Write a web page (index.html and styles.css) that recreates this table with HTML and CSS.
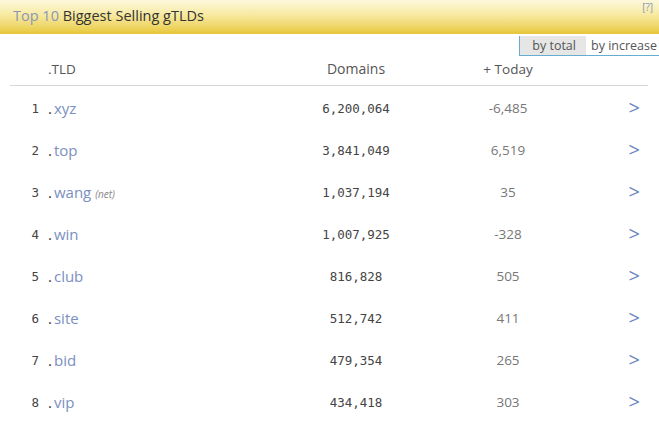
FILE: index.html
```html
<!DOCTYPE html>
<html>
<head>
<meta charset="utf-8">
<link rel="stylesheet" href="styles.css">
</head>
<body>
<div class="panel">
  <div class="head">
    <span class="title"><span class="hl">Top 10</span> Biggest Selling gTLDs</span>
    <span class="help">[?]</span>
  </div>
  <div class="tabs-row">
    <div class="tabs">
      <span class="tab active">by total</span>
      <span class="tab">by increase</span>
    </div>
  </div>
  <div class="grid colhead">
    <span></span>
    <span class="c-tld">.TLD</span>
    <span class="c-dom">Domains</span>
    <span></span>
    <span class="c-today">+ Today</span>
    <span></span>
  </div>
  <div class="rows">
    <div class="grid row"><span class="rank">1</span><span class="tld"><b>.</b>xyz</span><span class="dom">6,200,064</span><span></span><span class="today">-6,485</span><span class="arr">&gt;</span></div>
    <div class="grid row"><span class="rank">2</span><span class="tld"><b>.</b>top</span><span class="dom">3,841,049</span><span></span><span class="today">6,519</span><span class="arr">&gt;</span></div>
    <div class="grid row"><span class="rank">3</span><span class="tld"><b>.</b>wang <i>(net)</i></span><span class="dom">1,037,194</span><span></span><span class="today">35</span><span class="arr">&gt;</span></div>
    <div class="grid row"><span class="rank">4</span><span class="tld"><b>.</b>win</span><span class="dom">1,007,925</span><span></span><span class="today">-328</span><span class="arr">&gt;</span></div>
    <div class="grid row"><span class="rank">5</span><span class="tld"><b>.</b>club</span><span class="dom">816,828</span><span></span><span class="today">505</span><span class="arr">&gt;</span></div>
    <div class="grid row"><span class="rank">6</span><span class="tld"><b>.</b>site</span><span class="dom">512,742</span><span></span><span class="today">411</span><span class="arr">&gt;</span></div>
    <div class="grid row"><span class="rank">7</span><span class="tld"><b>.</b>bid</span><span class="dom">479,354</span><span></span><span class="today">265</span><span class="arr">&gt;</span></div>
    <div class="grid row"><span class="rank">8</span><span class="tld"><b>.</b>vip</span><span class="dom">434,418</span><span></span><span class="today">303</span><span class="arr">&gt;</span></div>
  </div>
</div>
</body>
</html>
```
FILE: styles.css
```css
html, body {
  margin: 0;
  padding: 0;
  background: #fff;
}
body {
  font-family: "Open Sans", "Noto Sans", sans-serif;
  color: #333;
  width: 659px;
  height: 425px;
  overflow: hidden;
}
.panel {
  width: 659px;
}
.head {
  height: 34px;
  display: flex;
  align-items: flex-start;
  justify-content: space-between;
  padding: 0 6px 0 13px;
  background: linear-gradient(to bottom, #fdf8dc 0%, #f8eba6 40%, #efd86e 75%, #e6c636 100%);
}
.title {
  font-size: 14.5px;
  line-height: 14px;
  margin-top: 9px;
  color: #333;
}
.hl {
  color: #8a97b6;
}
.help {
  font-size: 10px;
  line-height: 10px;
  margin-top: 2px;
  color: #8a97b6;
}
.tabs-row {
  display: flex;
  justify-content: flex-end;
  padding-top: 2px;
}
.tabs {
  display: flex;
  border-left: 1px solid #66aed0;
  border-bottom: 1px solid #66aed0;
}
.tab {
  font-size: 12.5px;
  line-height: 19px;
  height: 19px;
  padding: 0 2px 0 5px;
  color: #555;
}
.tab.active {
  background: #e6e6e6;
  padding: 0 10px 0 12px;
}
.grid {
  display: grid;
  grid-template-columns: 38px 248px 120px 32px 120px 1fr;
  margin: 0 11px 0 10px;
}
.colhead {
  height: 25px;
  padding-bottom: 4px;
  align-items: center;
  font-size: 13.5px;
  color: #555;
  border-bottom: 1px solid #d8d8d8;
}
.c-dom {
  font-size: 14px;
}
.c-dom, .c-today, .dom, .today {
  text-align: center;
}
.rows {
  padding-top: 1px;
}
.row {
  height: 42px;
  align-items: center;
}
.rank {
  font-family: "DejaVu Sans Mono", monospace;
  font-size: 12.5px;
  color: #444;
  text-align: right;
  padding-right: 9px;
}
.tld {
  font-size: 15px;
  color: #7b8fc0;
}
.tld b {
  font-weight: normal;
  color: #333;
  margin-right: 2px;
}
.tld i {
  font-size: 10px;
  color: #888;
}
.dom {
  font-family: "DejaVu Sans Mono", monospace;
  font-size: 12.5px;
  color: #444;
}
.today {
  font-size: 13.5px;
  color: #777;
}
.arr {
  text-align: right;
  padding-right: 8px;
  font-size: 20px;
  line-height: 20px;
  color: #6b84c0;
}
```
